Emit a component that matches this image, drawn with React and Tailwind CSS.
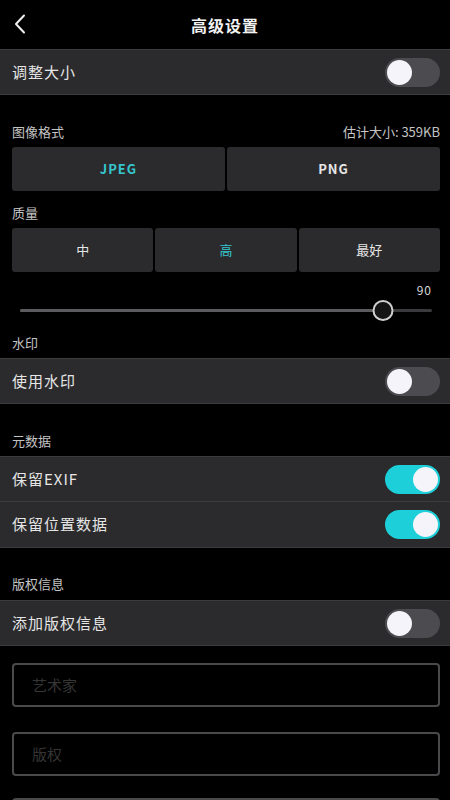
import React from 'react';

const FONT = { fontFamily: '"Noto Sans CJK SC", "Noto Sans", sans-serif' };

// iOS-style switch, purely visual
function Toggle({ on }) {
  return (
    <div
      className={`relative w-[55px] h-[29px] rounded-full ${on ? 'bg-[#1ccfd8]' : 'bg-[#4c4c50]'}`}
    >
      <div
        className={`absolute top-[2px] w-[25px] h-[25px] rounded-full bg-[#f4f4fa] ${on ? 'right-[2px]' : 'left-[2px]'}`}
      />
    </div>
  );
}

function Row({ label, on, borderTop = true }) {
  return (
    <div
      className={`h-[46px] flex items-center justify-between pl-[12px] pr-[10px] bg-[#2b2b2d] border-b border-[#3c3c3e] ${borderTop ? 'border-t' : ''}`}
    >
      <span className="text-[15px] text-[#e6e6e6] tracking-[1px]">{label}</span>
      <Toggle on={on} />
    </div>
  );
}

function SectionLabel({ children, right, className }) {
  return (
    <div className={`flex items-center justify-between pl-[12px] pr-[10px] leading-[18px] ${className}`}>
      <span className="text-[13px] text-[#c4c4c4]">{children}</span>
      {right && <span className="text-[13px] text-[#c4c4c4]">{right}</span>}
    </div>
  );
}

function Segmented({ items, active, bold }) {
  return (
    <div className="ml-[12px] mr-[10px] h-[44px] flex gap-[2px]">
      {items.map((item) => (
        <div
          key={item}
          className={`flex-1 flex items-center justify-center bg-[#2b2b2d] rounded-[3px] text-[13px] ${bold ? 'font-bold tracking-[1px] text-[12px]' : ''} ${item === active ? 'text-[#35c6cd]' : 'text-[#e6e6e6]'}`}
        >
          {item}
        </div>
      ))}
    </div>
  );
}

function Input({ placeholder, className }) {
  return (
    <div
      className={`ml-[12px] mr-[10px] h-[44px] border-2 border-[#4a4a4c] rounded-[4px] flex items-center pl-[18px] text-[15px] text-[#353535] ${className}`}
    >
      {placeholder}
    </div>
  );
}

export default function App() {
  return (
    <div className="w-[450px] h-[800px] bg-black overflow-hidden" style={FONT}>
      {/* Header */}
      <div className="relative h-[49px] flex items-center justify-center">
        <svg
          className="absolute left-[13px] top-[14px]"
          width="14"
          height="20"
          viewBox="0 0 14 20"
          fill="none"
        >
          <path d="M11 1.5 L3 10 L11 18.5" stroke="#f0f0f0" strokeWidth="2" strokeLinecap="round" strokeLinejoin="round" />
        </svg>
        <span className="text-[16px] font-bold text-[#f2f2f2] tracking-[1px]">高级设置</span>
      </div>

      <Row label="调整大小" on={false} />

      <SectionLabel className="pt-[28px] pb-[6px]" right="估计大小: 359KB">
        图像格式
      </SectionLabel>
      <Segmented items={['JPEG', 'PNG']} active="JPEG" bold />

      <SectionLabel className="pt-[13px] pb-[6px]">质量</SectionLabel>
      <Segmented items={['中', '高', '最好']} active="高" />

      {/* Slider */}
      <div className="flex justify-end pr-[18px] pt-[10px] leading-[16px]">
        <span className="text-[12px] text-[#d8d8d8] tracking-[1px]">90</span>
      </div>
      <div className="relative h-[24px] ml-[20px] mr-[18px] flex items-center">
        <div className="flex-1 h-[3px] rounded-full bg-[#3a3a3c] flex">
          <div className="w-[88%] h-full rounded-full bg-[#5c5c5e]" />
        </div>
        <div className="absolute left-[88%] -translate-x-1/2 w-[21px] h-[21px] rounded-full border-2 border-[#cfcfcf] bg-[#141414]" />
      </div>

      <SectionLabel className="pt-[12px] pb-[6px]">水印</SectionLabel>
      <Row label="使用水印" on={false} />

      <SectionLabel className="pt-[28px] pb-[6px]">元数据</SectionLabel>
      <Row label="保留EXIF" on />
      <Row label="保留位置数据" on borderTop={false} />

      <SectionLabel className="pt-[27px] pb-[7px]">版权信息</SectionLabel>
      <Row label="添加版权信息" on={false} />

      <Input placeholder="艺术家" className="mt-[17px]" />
      <Input placeholder="版权" className="mt-[25px]" />
      <Input placeholder="" className="mt-[22px]" />
    </div>
  );
}
